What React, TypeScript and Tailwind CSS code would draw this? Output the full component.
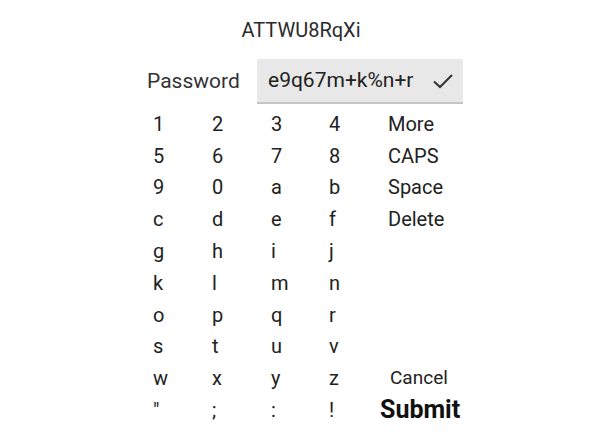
import React from "react";

const rows: string[][] = [
  ["1", "2", "3", "4"],
  ["5", "6", "7", "8"],
  ["9", "0", "a", "b"],
  ["c", "d", "e", "f"],
  ["g", "h", "i", "j"],
  ["k", "l", "m", "n"],
  ["o", "p", "q", "r"],
  ["s", "t", "u", "v"],
  ["w", "x", "y", "z"],
  ["\"", ";", ":", "!"],
];

const side: Record<number, React.ReactNode> = {
  0: <span className="text-[20px]">More</span>,
  1: <span className="text-[20px]">CAPS</span>,
  2: <span className="text-[20px]">Space</span>,
  3: <span className="text-[20px]">Delete</span>,
  8: <span className="text-[19px] pl-[2px]">Cancel</span>,
  9: <span className="text-[25px] font-bold -ml-[8px] text-[#111]">Submit</span>,
};

export default function App() {
  return (
    <div
      className="w-[592px] h-[444px] bg-white text-[#222] overflow-hidden"
      style={{ fontFamily: "Roboto, 'Noto Sans', sans-serif" }}
    >
      <div className="pl-[147px] w-[316px] box-content">
        <div className="h-[59px] flex items-center justify-center text-[20px] text-[#2a2a2a] pr-[8px]">
          ATTWU8RqXi
        </div>
        <div className="flex items-center h-[45px]">
          <div className="w-[110px] text-[21px] text-[#333]">Password</div>
          <div className="flex-1 h-[45px] bg-[#e8e8e8] border-b-2 border-[#c4c4c4] flex items-center pl-[11px] pr-[9px]">
            <span className="text-[21px] text-[#222]">e9q67m+k%n+r</span>
            <svg className="ml-auto" width="22" height="16" viewBox="0 0 22 16">
              <path d="M2 8.5 L8 14 L20 2" fill="none" stroke="#333" strokeWidth="2" />
            </svg>
          </div>
        </div>
      </div>
      <div className="pl-[153px] pt-[4px] grid grid-cols-[59px_59px_58px_59px_auto]">
        {rows.map((r, i) => (
          <React.Fragment key={i}>
            {r.map((k, j) => (
              <div key={j} className="h-[31.8px] flex items-center text-[20px] text-[#222]">
                {k}
              </div>
            ))}
            <div className="h-[31.8px] flex items-center text-[#222]">{side[i] ?? null}</div>
          </React.Fragment>
        ))}
      </div>
    </div>
  );
}
